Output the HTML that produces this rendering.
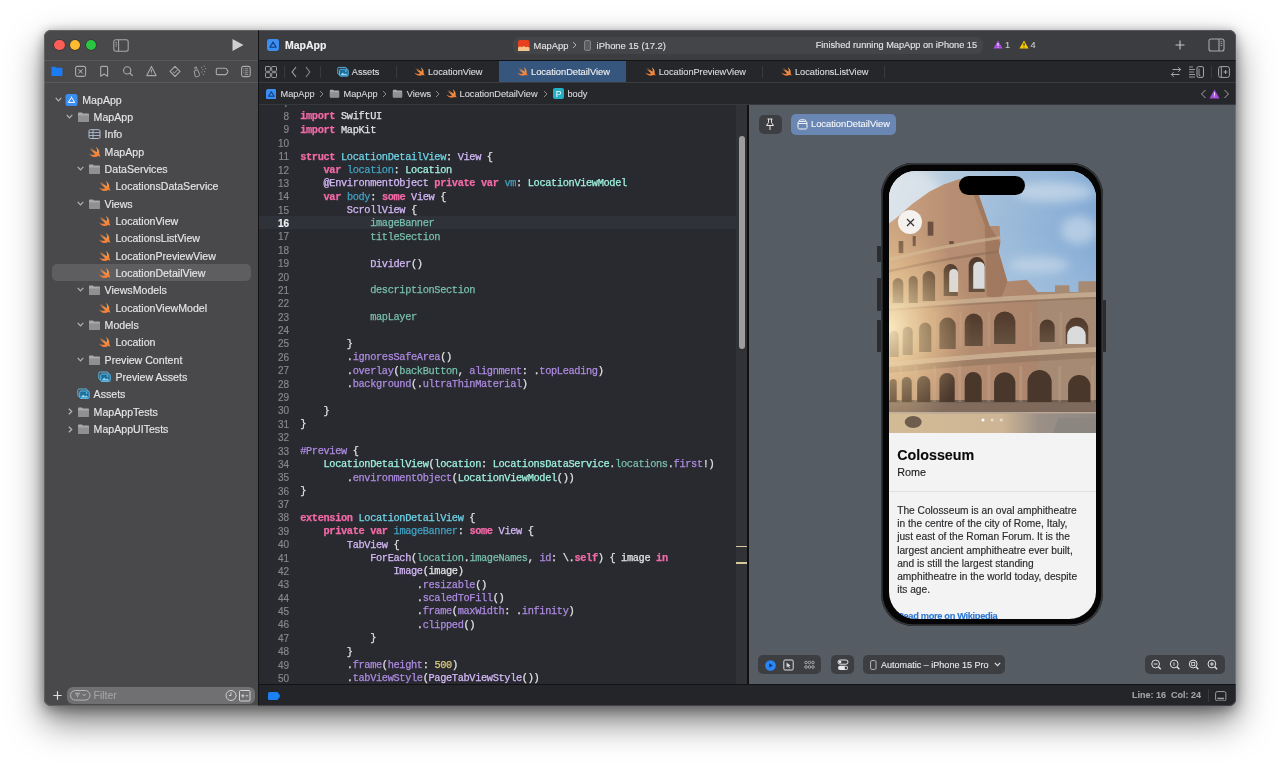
<!DOCTYPE html>
<html><head><meta charset="utf-8">
<style>
*{box-sizing:border-box;margin:0;padding:0}
html,body{width:1280px;height:765px;overflow:hidden;background:#fff}
body{position:relative;font-family:"Liberation Sans",sans-serif;color:#e6e6e7}
.a{position:absolute}
#shadow{position:absolute;left:44px;top:30px;width:1192px;height:676px;border-radius:7px;box-shadow:0 16px 34px rgba(0,0,0,.5),0 6px 14px rgba(0,0,0,.25),0 0 10px rgba(0,0,0,.18)}
#win{position:absolute;left:44px;top:30px;width:1192px;height:676px;border-radius:7px;overflow:hidden;background:#292a30;will-change:transform}
#side{left:0;top:0;width:214px;height:676px;background:#49494c}
.hl{position:absolute;height:1px}
.t{position:absolute;white-space:pre;line-height:1;-webkit-text-stroke:.12px currentColor}
.row{position:absolute;white-space:pre;font-size:10.6px;line-height:12px;color:#e6e6e7;-webkit-text-stroke:.15px currentColor}
#code{left:215px;top:75px;width:488px;height:579px;background:#292a30;overflow:hidden}
.ln{position:absolute;left:0;width:30px;text-align:right;font-family:"Liberation Sans",sans-serif;font-size:10px;line-height:13.38px;color:#88888d;margin-top:.8px;-webkit-text-stroke:.15px currentColor}
.ln.cur{color:#f0f0f0;font-weight:bold}
.cl{position:absolute;left:41.2px;white-space:pre;font-family:"Liberation Mono",monospace;font-size:10.3px;letter-spacing:-0.347px;line-height:13.38px;color:#e2e2e3;-webkit-text-stroke:.25px currentColor;margin-top:1.2px}
.k{color:#f26aa6;font-weight:bold}
.td{color:#6fd4e6}
.od{color:#41a1c0}
.pc{color:#9ef1dd}
.pf{color:#78bfac}
.oc{color:#d3b8f6}
.of{color:#ad8ae0}
.nu{color:#d9c97c}
</style></head><body>
<svg width="0" height="0" style="position:absolute">
<defs>
<linearGradient id="gsw" x1="0" y1="0" x2="0" y2="1"><stop offset="0" stop-color="#f7a24c"/><stop offset="1" stop-color="#f07a36"/></linearGradient>
<symbol id="i-swift" viewBox="1.6 2.2 20 19">
<path d="M13.543 3.41c4.114 2.47 6.545 7.162 5.549 11.131-.024.093-.05.181-.076.272l.002.001c2.062 2.538 1.5 5.258 1.236 4.745-1.072-2.086-3.066-1.568-4.088-1.043a6.803 6.803 0 0 1-.281.158l-.02.012-.002.002c-2.115 1.123-4.957 1.205-7.812-.022a12.568 12.568 0 0 1-5.64-4.838c.649.48 1.35.902 2.097 1.252 3.019 1.414 6.051 1.311 8.197-.002C9.651 12.73 7.101 9.67 5.146 7.191a10.628 10.628 0 0 1-1.005-1.384c2.34 2.142 6.038 4.83 7.365 5.576C8.69 8.408 6.208 4.743 6.324 4.86c4.436 4.47 8.528 6.996 8.528 6.996.154.085.27.154.36.213.085-.215.16-.437.224-.668.708-2.588-.09-5.548-1.893-7.992z" fill="url(#gsw)"/>
</symbol>
<symbol id="i-folder" viewBox="0 0 13 12">
<path d="M1 2.4 Q1 1.6 1.8 1.6 H4.9 L6 2.6 H11.2 Q12 2.6 12 3.4 V9.9 Q12 10.7 11.2 10.7 H1.8 Q1 10.7 1 9.9 Z" fill="#a9a9ac"/>
<path d="M1 4.4 H12 V9.9 Q12 10.7 11.2 10.7 H1.8 Q1 10.7 1 9.9 Z" fill="#909093"/>
</symbol>
<symbol id="i-proj" viewBox="0 0 13 12">
<rect x="0.5" y="0" width="12" height="12" rx="2.6" fill="#3a8ef2"/>
<path d="M6.5 3.4 L3.3 8.4 H9.7 Z M6.5 2.5 V3.8" stroke="#fff" stroke-width="1" fill="none" stroke-linejoin="round"/>
</symbol>
<symbol id="i-plist" viewBox="0 0 13 12">
<rect x="1" y="1.7" width="11" height="8.8" rx="1.4" fill="none" stroke="#aebfd0" stroke-width="1"/>
<path d="M1 4.6 H12 M1 7.5 H12 M5 1.7 V10.5" stroke="#aebfd0" stroke-width="0.9"/>
</symbol>
<symbol id="i-assets" viewBox="0 0 13 12">
<rect x="0.8" y="1" width="9.5" height="7.5" rx="1.3" fill="none" stroke="#5ab7e6" stroke-width="1"/>
<rect x="2.7" y="3" width="9.5" height="7.5" rx="1.3" fill="#1d6f9a" stroke="#5ab7e6" stroke-width="1"/>
<path d="M3.6 9.6 L6.2 6.6 L8 8.4 L9.2 7.3 L11.4 9.6 Z" fill="#8fd4f5"/>
<circle cx="9.6" cy="5" r="0.8" fill="#8fd4f5"/>
</symbol>
</defs>
</svg>
<div id="shadow"></div>
<div id="win">
<div id="side" class="a">
<!-- traffic lights -->
<div class="a" style="left:10.05px;top:9.75px;width:10.5px;height:10.5px;border-radius:50%;background:#fd5e57;box-shadow:0 0 0 .7px rgba(0,0,0,.3)"></div>
<div class="a" style="left:25.75px;top:9.75px;width:10.5px;height:10.5px;border-radius:50%;background:#febb2e;box-shadow:0 0 0 .7px rgba(0,0,0,.3)"></div>
<div class="a" style="left:41.75px;top:9.75px;width:10.5px;height:10.5px;border-radius:50%;background:#2bc641;box-shadow:0 0 0 .7px rgba(0,0,0,.3)"></div>
<!-- sidebar toggle -->
<svg class="a" style="left:68.6px;top:8.6px" width="16" height="13" viewBox="0 0 16 13"><rect x=".8" y=".8" width="14.4" height="11.4" rx="2" fill="none" stroke="#a9a9ac" stroke-width="1.05"/><path d="M5.6 .8 V12.2" stroke="#a9a9ac" stroke-width="1.05"/><path d="M2.5 3.4 H4 M2.5 5.2 H4 M2.5 7 H4" stroke="#a9a9ac" stroke-width=".9"/></svg>
<!-- play -->
<svg class="a" style="left:187px;top:8px" width="14" height="14" viewBox="0 0 14 14"><path d="M1.5 1 L12.5 7 L1.5 13 Z" fill="#cfcfd1"/></svg>
<div class="hl" style="left:0;top:30px;width:214px;background:#59595c"></div>
<!-- nav icons -->
<svg class="a" style="left:0;top:35px" width="214" height="14" viewBox="0 0 214 14" fill="none" stroke="#a9a9ac" stroke-width="1.1">
 <path d="M7.5 2.6 Q7.5 1.8 8.3 1.8 H11.4 L12.4 2.8 H17.6 Q18.4 2.8 18.4 3.6 V10.2 Q18.4 11 17.6 11 H8.3 Q7.5 11 7.5 10.2 Z" fill="#1b7cf4" stroke="none"/>
 <rect x="31.6" y="1.4" width="10" height="10" rx="1.8"/>
 <path d="M34.3 4.1 L38.9 8.7 M38.9 4.1 L34.3 8.7" stroke-width=".9"/><circle cx="36.6" cy="6.4" r="1.1" fill="#a9a9ac" stroke="none"/>
 <path d="M56.7 2.4 Q56.7 1.4 57.7 1.4 H62.6 Q63.6 1.4 63.6 2.4 V11.2 L60.15 9 L56.7 11.2 Z" stroke-linejoin="round"/>
 <circle cx="83.2" cy="5.4" r="3.6"/><path d="M85.8 8 L88.6 10.9" stroke-width="1.3"/>
 <path d="M107.45 1.4 L112.1 10.6 H102.8 Z" stroke-linejoin="round"/><path d="M107.45 4.6 V7.6 M107.45 8.7 V9.3" stroke-width="1"/>
 <path d="M131 1.3 L136 6.4 L131 11.5 L126 6.4 Z" stroke-linejoin="round"/><path d="M128.8 6.5 L130.4 8 L133.3 5" stroke-width="1"/>
 <path d="M150.2 6 L153.6 4.6 L155.6 9.6 Q155.9 10.6 154.9 11 L152.6 11.9 Q151.6 12.3 151.2 11.3 Z M151.4 4.4 L150.6 2.6 L152.3 1.9 L153 3.7" stroke-width=".95" stroke-linejoin="round"/>
 <path d="M157.5 2.2 h.01 M160.2 1 h.01 M158.8 4.6 h.01 M161.6 3.6 h.01 M157.8 7 h.01 M160.4 6.6 h.01 M159.4 9.2 h.01" stroke-width="1.1" stroke-linecap="round"/>
 <path d="M173.3 3.3 H181.4 Q182.2 3.3 182.7 4 L184 6.45 L182.7 8.9 Q182.2 9.6 181.4 9.6 H173.3 Q172.3 9.6 172.3 8.6 V4.3 Q172.3 3.3 173.3 3.3 Z"/>
 <rect x="197.6" y="1.4" width="8.6" height="10.2" rx="1.8"/><path d="M200.6 3.8 H204.2 M200.6 5.8 H204.2 M200.6 7.8 H204.2 M200.6 9.6 H204.2" stroke-width=".8"/><path d="M199.1 3.8 h.6 M199.1 5.8 h.6 M199.1 7.8 h.6" stroke-width=".8"/>
</svg>
<div class="hl" style="left:0;top:52px;width:214px;background:#59595c"></div>
<!-- selected row -->
<div class="a" style="left:8.4px;top:234.2px;width:198.2px;height:17px;border-radius:5px;background:#5e5e61"></div>
<!-- bottom filter -->
<svg class="a" style="left:9.4px;top:661.4px" width="9" height="9" viewBox="0 0 9 9"><path d="M4.5 .3 V8.7 M.3 4.5 H8.7" stroke="#e0e0e2" stroke-width="1.2"/></svg>
<div class="a" style="left:22.5px;top:657px;width:188px;height:16.6px;border-radius:6px;background:#707073"></div>
<svg class="a" style="left:26px;top:660px" width="21" height="11" viewBox="0 0 21 11" fill="none" stroke="#bcbcbe" stroke-width=".9"><rect x=".5" y=".5" width="19.5" height="9.6" rx="4.8"/><path d="M5 3.3 H10 M6 5 H9 M7 6.7 H8"/><path d="M12.5 4 L14.2 5.8 L15.9 4"/></svg>
<div class="t" style="left:49.5px;top:660px;font-size:10.5px;color:#a2a2a5">Filter</div>
<svg class="a" style="left:181px;top:659px" width="28" height="13" viewBox="0 0 28 13" fill="none" stroke="#d2d2d4" stroke-width="1"><circle cx="6" cy="6.5" r="5"/><path d="M6 3.5 V6.5 H3.8"/><rect x="14.5" y="1.5" width="10.5" height="10.5" rx="1"/><path d="M16.2 6.8 H19.4 M17.8 5.2 V8.4 M20.8 6.8 H23.2" stroke-width="1.1"/></svg>
<svg class="a" style="left:10.7px;top:66.7px" width="7" height="5" viewBox="0 0 7 5"><path d="M0.7 0.8 L3.5 3.8 L6.3 0.8" fill="none" stroke="#b4b4b6" stroke-width="1.2"/></svg>
<svg class="a" style="left:21.3px;top:63.7px" width="13" height="12"><use href="#i-proj"/></svg>
<div class="row" style="left:38.3px;top:63.7px">MapApp</div>
<svg class="a" style="left:22.0px;top:84.0px" width="7" height="5" viewBox="0 0 7 5"><path d="M0.7 0.8 L3.5 3.8 L6.3 0.8" fill="none" stroke="#b4b4b6" stroke-width="1.2"/></svg>
<svg class="a" style="left:32.6px;top:81.0px" width="13" height="12"><use href="#i-folder"/></svg>
<div class="row" style="left:49.6px;top:81.0px">MapApp</div>
<svg class="a" style="left:43.6px;top:98.4px" width="13" height="12"><use href="#i-plist"/></svg>
<div class="row" style="left:60.6px;top:98.4px">Info</div>
<svg class="a" style="left:43.6px;top:115.7px" width="13" height="12"><use href="#i-swift"/></svg>
<div class="row" style="left:60.6px;top:115.7px">MapApp</div>
<svg class="a" style="left:33.0px;top:136.0px" width="7" height="5" viewBox="0 0 7 5"><path d="M0.7 0.8 L3.5 3.8 L6.3 0.8" fill="none" stroke="#b4b4b6" stroke-width="1.2"/></svg>
<svg class="a" style="left:43.6px;top:133.0px" width="13" height="12"><use href="#i-folder"/></svg>
<div class="row" style="left:60.6px;top:133.0px">DataServices</div>
<svg class="a" style="left:54.4px;top:150.3px" width="13" height="12"><use href="#i-swift"/></svg>
<div class="row" style="left:71.4px;top:150.3px">LocationsDataService</div>
<svg class="a" style="left:33.0px;top:170.7px" width="7" height="5" viewBox="0 0 7 5"><path d="M0.7 0.8 L3.5 3.8 L6.3 0.8" fill="none" stroke="#b4b4b6" stroke-width="1.2"/></svg>
<svg class="a" style="left:43.6px;top:167.7px" width="13" height="12"><use href="#i-folder"/></svg>
<div class="row" style="left:60.6px;top:167.7px">Views</div>
<svg class="a" style="left:54.4px;top:185.0px" width="13" height="12"><use href="#i-swift"/></svg>
<div class="row" style="left:71.4px;top:185.0px">LocationView</div>
<svg class="a" style="left:54.4px;top:202.3px" width="13" height="12"><use href="#i-swift"/></svg>
<div class="row" style="left:71.4px;top:202.3px">LocationsListView</div>
<svg class="a" style="left:54.4px;top:219.7px" width="13" height="12"><use href="#i-swift"/></svg>
<div class="row" style="left:71.4px;top:219.7px">LocationPreviewView</div>
<svg class="a" style="left:54.4px;top:237.0px" width="13" height="12"><use href="#i-swift"/></svg>
<div class="row" style="left:71.4px;top:237.0px">LocationDetailView</div>
<svg class="a" style="left:33.0px;top:257.3px" width="7" height="5" viewBox="0 0 7 5"><path d="M0.7 0.8 L3.5 3.8 L6.3 0.8" fill="none" stroke="#b4b4b6" stroke-width="1.2"/></svg>
<svg class="a" style="left:43.6px;top:254.3px" width="13" height="12"><use href="#i-folder"/></svg>
<div class="row" style="left:60.6px;top:254.3px">ViewsModels</div>
<svg class="a" style="left:54.4px;top:271.7px" width="13" height="12"><use href="#i-swift"/></svg>
<div class="row" style="left:71.4px;top:271.7px">LocationViewModel</div>
<svg class="a" style="left:33.0px;top:292.0px" width="7" height="5" viewBox="0 0 7 5"><path d="M0.7 0.8 L3.5 3.8 L6.3 0.8" fill="none" stroke="#b4b4b6" stroke-width="1.2"/></svg>
<svg class="a" style="left:43.6px;top:289.0px" width="13" height="12"><use href="#i-folder"/></svg>
<div class="row" style="left:60.6px;top:289.0px">Models</div>
<svg class="a" style="left:54.4px;top:306.3px" width="13" height="12"><use href="#i-swift"/></svg>
<div class="row" style="left:71.4px;top:306.3px">Location</div>
<svg class="a" style="left:33.0px;top:326.6px" width="7" height="5" viewBox="0 0 7 5"><path d="M0.7 0.8 L3.5 3.8 L6.3 0.8" fill="none" stroke="#b4b4b6" stroke-width="1.2"/></svg>
<svg class="a" style="left:43.6px;top:323.6px" width="13" height="12"><use href="#i-folder"/></svg>
<div class="row" style="left:60.6px;top:323.6px">Preview Content</div>
<svg class="a" style="left:54.4px;top:341.0px" width="13" height="12"><use href="#i-assets"/></svg>
<div class="row" style="left:71.4px;top:341.0px">Preview Assets</div>
<svg class="a" style="left:32.6px;top:358.3px" width="13" height="12"><use href="#i-assets"/></svg>
<div class="row" style="left:49.6px;top:358.3px">Assets</div>
<svg class="a" style="left:24.3px;top:378.1px" width="5" height="7" viewBox="0 0 5 7"><path d="M0.8 0.7 L3.8 3.5 L0.8 6.3" fill="none" stroke="#b4b4b6" stroke-width="1.2"/></svg>
<svg class="a" style="left:32.6px;top:375.6px" width="13" height="12"><use href="#i-folder"/></svg>
<div class="row" style="left:49.6px;top:375.6px">MapAppTests</div>
<svg class="a" style="left:24.3px;top:395.5px" width="5" height="7" viewBox="0 0 5 7"><path d="M0.8 0.7 L3.8 3.5 L0.8 6.3" fill="none" stroke="#b4b4b6" stroke-width="1.2"/></svg>
<svg class="a" style="left:32.6px;top:393.0px" width="13" height="12"><use href="#i-folder"/></svg>
<div class="row" style="left:49.6px;top:393.0px">MapAppUITests</div>

</div>
<div class="a" style="left:214px;top:0;width:1.2px;height:676px;background:#141416"></div>
<!-- editor title bar -->
<div class="a" style="left:215px;top:0;width:977px;height:30px;background:#3c3d40"></div>
<div class="hl" style="left:215px;top:30px;width:977px;background:#141416"></div>
<svg class="a" style="left:222.6px;top:9px" width="12" height="12" viewBox="0 0 12 12"><rect x="0" y="0" width="12" height="12" rx="2.4" fill="#3b8ef3"/><path d="M6 3.2 L2.9 8.2 H9.1 Z M6 2.4 V3.6" stroke="#143a78" stroke-width="1.15" fill="none" stroke-linejoin="round"/></svg>
<div class="t" style="left:241px;top:9.5px;font-size:10.5px;font-weight:bold;color:#f2f2f3">MapApp</div>
<!-- activity capsule -->
<div class="a" style="left:468.5px;top:6.7px;width:470px;height:17.2px;border-radius:6px;background:#444548"></div>
<svg class="a" style="left:474.4px;top:9.5px" width="11.5" height="11.5" viewBox="0 0 12 12"><rect width="12" height="12" rx="2.2" fill="#e8401f"/><path d="M0 12 V8 Q2 6 4 7.5 Q6 5.5 8 7.5 Q10 6.5 12 8 V12 Z" fill="#f4c28a"/></svg>
<div class="t" style="left:489.6px;top:10.5px;font-size:9.4px;color:#e4e4e6">MapApp</div>
<svg class="a" style="left:528px;top:11px" width="5" height="8" viewBox="0 0 5 8"><path d="M1 1 L4 4 L1 7" fill="none" stroke="#b0b0b3" stroke-width="1"/></svg>
<svg class="a" style="left:540px;top:9.7px" width="7" height="11" viewBox="0 0 7 11"><rect x=".6" y=".6" width="5.8" height="9.8" rx="1.2" fill="#5c5c60" stroke="#8e8e91" stroke-width=".9"/></svg>
<div class="t" style="left:552.6px;top:10.5px;font-size:9.4px;color:#e4e4e6">iPhone 15 (17.2)</div>
<div class="t" style="left:771.7px;top:10.5px;font-size:9.2px;color:#e4e4e6">Finished running MapApp on iPhone 15</div>
<svg class="a" style="left:949px;top:10px" width="10" height="9" viewBox="0 0 10 9"><path d="M5 .5 L9.6 8.5 H.4 Z" fill="#a94ddf"/><path d="M5 3 V6 M5 7 V7.6" stroke="#fff" stroke-width="1"/></svg>
<div class="t" style="left:961px;top:10.5px;font-size:9.2px;color:#c9c9cc">1</div>
<svg class="a" style="left:975px;top:10px" width="10" height="9" viewBox="0 0 10 9"><path d="M5 .5 L9.6 8.5 H.4 Z" fill="#f5c800"/><path d="M5 3 V6 M5 7 V7.6" stroke="#3a2c00" stroke-width="1"/></svg>
<div class="t" style="left:986.5px;top:10.5px;font-size:9.2px;color:#c9c9cc">4</div>
<svg class="a" style="left:1131px;top:10px" width="10" height="10" viewBox="0 0 10 10"><path d="M5 .5 V9.5 M.5 5 H9.5" stroke="#c8c8ca" stroke-width="1.1"/></svg>
<svg class="a" style="left:1164px;top:8px" width="17" height="14" viewBox="0 0 17 14"><rect x="1" y="1" width="15" height="12" rx="2" fill="none" stroke="#a9a9ac" stroke-width="1.1"/><path d="M11 1 V13" stroke="#a9a9ac" stroke-width="1.1"/><path d="M12.6 3.6 H14.2 M12.6 5.6 H14.2 M12.6 7.6 H14.2" stroke="#a9a9ac" stroke-width=".9"/></svg>

<!-- tab bar -->
<div class="a" style="left:215px;top:31px;width:977px;height:21.5px;background:#26272b"></div>
<div class="a" style="left:454.75px;top:31px;width:127px;height:21.5px;background:#37567e"></div>
<svg class="a" style="left:221.3px;top:35.7px" width="12" height="12" viewBox="0 0 12 12" fill="none" stroke="#a6a6a9" stroke-width=".95"><rect x=".5" y=".5" width="4.8" height="4.8" rx=".7"/><rect x="6.7" y=".5" width="4.8" height="4.8" rx=".7"/><rect x=".5" y="6.7" width="4.8" height="4.8" rx=".7"/><rect x="6.7" y="6.7" width="4.8" height="4.8" rx=".7"/></svg>
<div class="a" style="left:240px;top:36px;width:1px;height:12px;background:#3a3a3e"></div>
<svg class="a" style="left:247px;top:36px" width="24" height="12" viewBox="0 0 24 12" fill="none" stroke="#a6a6a9" stroke-width="1.1"><path d="M5 1 L1.2 6 L5 11"/><path d="M15 1 L18.8 6 L15 11" stroke="#8a8a8d"/></svg>
<div class="a" style="left:275.5px;top:36px;width:1px;height:12px;background:#3a3a3e"></div>
<svg class="a" style="left:292.5px;top:36px" width="12" height="12"><use href="#i-assets"/></svg>
<div class="t" style="left:307.75px;top:37.7px;font-size:9.2px;color:#dcdcde">Assets</div>
<div class="a" style="left:351.7px;top:36px;width:1px;height:12px;background:#3a3a3e"></div>
<svg class="a" style="left:370px;top:36px" width="11" height="11"><use href="#i-swift"/></svg>
<div class="t" style="left:384px;top:37.7px;font-size:9.2px;color:#dcdcde">LocationView</div>
<svg class="a" style="left:473px;top:36px" width="11" height="11"><use href="#i-swift"/></svg>
<div class="t" style="left:487px;top:37.7px;font-size:9.3px;color:#f0f0f2">LocationDetailView</div>
<svg class="a" style="left:600.6px;top:36px" width="11" height="11"><use href="#i-swift"/></svg>
<div class="t" style="left:614.75px;top:37.7px;font-size:9.2px;color:#dcdcde">LocationPreviewView</div>
<div class="a" style="left:718px;top:36px;width:1px;height:12px;background:#3a3a3e"></div>
<svg class="a" style="left:737px;top:36px" width="11" height="11"><use href="#i-swift"/></svg>
<div class="t" style="left:751px;top:37.7px;font-size:9.2px;color:#dcdcde">LocationsListView</div>
<div class="a" style="left:840px;top:36px;width:1px;height:12px;background:#3a3a3e"></div>
<svg class="a" style="left:1126px;top:36px" width="12" height="12" viewBox="0 0 12 12" fill="none" stroke="#a6a6a9" stroke-width="1"><path d="M2.5 3.5 H10.5 M8.3 1.2 L10.6 3.5 L8.3 5.8"/><path d="M9.5 8.5 H1.5 M3.7 6.2 L1.4 8.5 L3.7 10.8"/></svg>
<svg class="a" style="left:1144px;top:36px" width="17" height="12" viewBox="0 0 17 12" fill="none" stroke="#a6a6a9" stroke-width=".9"><path d="M1 1 H5 M1 3.5 H7 M1 6 H6 M1 8.5 H7 M1 11 H7"/><rect x="9" y=".6" width="6.5" height="10.8" rx="1.5" stroke-width="1"/><path d="M11 2.6 V9.4 H12.3"/></svg>
<div class="a" style="left:1167px;top:36px;width:1px;height:12px;background:#3a3a3e"></div>
<svg class="a" style="left:1173.5px;top:36px" width="12" height="12" viewBox="0 0 12 12" fill="none" stroke="#a6a6a9" stroke-width="1"><rect x=".6" y=".6" width="10.8" height="10.8" rx="2"/><path d="M3.3 .6 V11.4"/><path d="M5.5 6 H9.5 M7.5 4 V8"/></svg>

<!-- breadcrumb -->
<div class="a" style="left:215px;top:53px;width:977px;height:21.5px;background:#26272b"></div>
<div class="hl" style="left:215px;top:52.3px;width:977px;background:#3a3b3f"></div>
<div class="hl" style="left:215px;top:74.3px;width:977px;background:#37383d"></div>
<svg class="a" style="left:221.8px;top:58.5px" width="10.7" height="10.7" viewBox="0 0 12 12"><rect width="12" height="12" rx="2.4" fill="#3b8ef3"/><path d="M6 3.2 L2.9 8.2 H9.1 Z M6 2.4 V3.6" stroke="#143a78" stroke-width="1.15" fill="none" stroke-linejoin="round"/></svg>
<div class="t" style="left:236.5px;top:59.5px;font-size:9.2px;color:#d8d8da">MapApp</div>
<svg class="a" style="left:275px;top:60px" width="5" height="8" viewBox="0 0 5 8"><path d="M1 1 L4 4 L1 7" fill="none" stroke="#8a8a8d" stroke-width="1"/></svg>
<svg class="a" style="left:284.5px;top:58px" width="11" height="11" viewBox="0 0 13 12"><use href="#i-folder"/></svg>
<div class="t" style="left:299.5px;top:59.5px;font-size:9.2px;color:#d8d8da">MapApp</div>
<svg class="a" style="left:338px;top:60px" width="5" height="8" viewBox="0 0 5 8"><path d="M1 1 L4 4 L1 7" fill="none" stroke="#8a8a8d" stroke-width="1"/></svg>
<svg class="a" style="left:347.5px;top:58px" width="11" height="11" viewBox="0 0 13 12"><use href="#i-folder"/></svg>
<div class="t" style="left:362.8px;top:59.5px;font-size:9.2px;color:#d8d8da">Views</div>
<svg class="a" style="left:391px;top:60px" width="5" height="8" viewBox="0 0 5 8"><path d="M1 1 L4 4 L1 7" fill="none" stroke="#8a8a8d" stroke-width="1"/></svg>
<svg class="a" style="left:401.5px;top:58px" width="11" height="11"><use href="#i-swift"/></svg>
<div class="t" style="left:415.6px;top:59.5px;font-size:9.2px;color:#d8d8da">LocationDetailView</div>
<svg class="a" style="left:499px;top:60px" width="5" height="8" viewBox="0 0 5 8"><path d="M1 1 L4 4 L1 7" fill="none" stroke="#8a8a8d" stroke-width="1"/></svg>
<svg class="a" style="left:508.5px;top:58.3px" width="11" height="11" viewBox="0 0 11 11"><rect width="11" height="11" rx="2" fill="#23b0c4"/><text x="5.5" y="8.6" font-size="8.5" font-family="Liberation Sans" fill="#fff" text-anchor="middle">P</text></svg>
<div class="t" style="left:523.5px;top:59.5px;font-size:9.2px;color:#d8d8da">body</div>
<svg class="a" style="left:1155.5px;top:59px" width="7" height="10" viewBox="0 0 7 10"><path d="M5.5 1 L1.5 5 L5.5 9" fill="none" stroke="#a6a6a9" stroke-width="1"/></svg>
<svg class="a" style="left:1165px;top:58.5px" width="11" height="10" viewBox="0 0 11 10"><path d="M5.5 .5 L10.5 9.5 H.5 Z" fill="#a64ee0" stroke-linejoin="round"/><path d="M5.5 3.5 V6.6 M5.5 7.6 V8.2" stroke="#f4e6ff" stroke-width="1"/></svg>
<svg class="a" style="left:1179px;top:59px" width="7" height="10" viewBox="0 0 7 10"><path d="M1.5 1 L5.5 5 L1.5 9" fill="none" stroke="#a6a6a9" stroke-width="1"/></svg>
<div id="code" class="a">
  <div class="a" style="left:0;top:111px;width:477px;height:13px;background:#2f3239"></div>
  <div class="a" style="left:476.7px;top:0;width:11.3px;height:579px;background:#313236"></div>
  <div class="a" style="left:479.9px;top:31px;width:6px;height:212.8px;border-radius:3px;background:#9d9da0"></div>
  <div class="a" style="left:477px;top:440.5px;width:11px;height:1.6px;background:#d6c99b"></div>
  <div class="a" style="left:477px;top:457.2px;width:11px;height:1.6px;background:#d6c99b"></div>
  <div id="lines" class="a" style="left:0;top:0;width:476px;height:579px">
  <div class="ln" style="top:-9.17px">7</div>
<div class="ln" style="top:4.21px">8</div>
<div class="cl" style="top:4.21px"><span class="k">import</span> SwiftUI</div>
<div class="ln" style="top:17.59px">9</div>
<div class="cl" style="top:17.59px"><span class="k">import</span> MapKit</div>
<div class="ln" style="top:30.97px">10</div>
<div class="cl" style="top:30.97px"></div>
<div class="ln" style="top:44.35px">11</div>
<div class="cl" style="top:44.35px"><span class="k">struct</span> <span class="td">LocationDetailView</span>: <span class="oc">View</span> {</div>
<div class="ln" style="top:57.73px">12</div>
<div class="cl" style="top:57.73px">    <span class="k">var</span> <span class="od">location</span>: <span class="pc">Location</span></div>
<div class="ln" style="top:71.11px">13</div>
<div class="cl" style="top:71.11px">    <span class="oc">@EnvironmentObject</span> <span class="k">private</span> <span class="k">var</span> <span class="od">vm</span>: <span class="pc">LocationViewModel</span></div>
<div class="ln" style="top:84.49px">14</div>
<div class="cl" style="top:84.49px">    <span class="k">var</span> <span class="od">body</span>: <span class="k">some</span> <span class="oc">View</span> {</div>
<div class="ln" style="top:97.87px">15</div>
<div class="cl" style="top:97.87px">        <span class="oc">ScrollView</span> {</div>
<div class="ln cur" style="top:111.25px">16</div>
<div class="cl" style="top:111.25px">            <span class="pf">imageBanner</span></div>
<div class="ln" style="top:124.63px">17</div>
<div class="cl" style="top:124.63px">            <span class="pf">titleSection</span></div>
<div class="ln" style="top:138.01px">18</div>
<div class="cl" style="top:138.01px"></div>
<div class="ln" style="top:151.39px">19</div>
<div class="cl" style="top:151.39px">            <span class="oc">Divider</span>()</div>
<div class="ln" style="top:164.77px">20</div>
<div class="cl" style="top:164.77px"></div>
<div class="ln" style="top:178.15px">21</div>
<div class="cl" style="top:178.15px">            <span class="pf">descriptionSection</span></div>
<div class="ln" style="top:191.53px">22</div>
<div class="cl" style="top:191.53px"></div>
<div class="ln" style="top:204.91px">23</div>
<div class="cl" style="top:204.91px">            <span class="pf">mapLayer</span></div>
<div class="ln" style="top:218.29px">24</div>
<div class="cl" style="top:218.29px"></div>
<div class="ln" style="top:231.67px">25</div>
<div class="cl" style="top:231.67px">        }</div>
<div class="ln" style="top:245.05px">26</div>
<div class="cl" style="top:245.05px">        .<span class="of">ignoresSafeArea</span>()</div>
<div class="ln" style="top:258.43px">27</div>
<div class="cl" style="top:258.43px">        .<span class="of">overlay</span>(<span class="pf">backButton</span>, <span class="of">alignment</span>: .<span class="of">topLeading</span>)</div>
<div class="ln" style="top:271.81px">28</div>
<div class="cl" style="top:271.81px">        .<span class="of">background</span>(.<span class="of">ultraThinMaterial</span>)</div>
<div class="ln" style="top:285.19px">29</div>
<div class="cl" style="top:285.19px"></div>
<div class="ln" style="top:298.57px">30</div>
<div class="cl" style="top:298.57px">    }</div>
<div class="ln" style="top:311.95px">31</div>
<div class="cl" style="top:311.95px">}</div>
<div class="ln" style="top:325.33px">32</div>
<div class="cl" style="top:325.33px"></div>
<div class="ln" style="top:338.71px">33</div>
<div class="cl" style="top:338.71px"><span class="of">#Preview</span> {</div>
<div class="ln" style="top:352.09px">34</div>
<div class="cl" style="top:352.09px">    <span class="pc">LocationDetailView</span>(<span class="pc">location</span>: <span class="pc">LocationsDataService</span>.<span class="pf">locations</span>.<span class="of">first</span>!)</div>
<div class="ln" style="top:365.47px">35</div>
<div class="cl" style="top:365.47px">        .<span class="of">environmentObject</span>(<span class="pc">LocationViewModel</span>())</div>
<div class="ln" style="top:378.85px">36</div>
<div class="cl" style="top:378.85px">}</div>
<div class="ln" style="top:392.23px">37</div>
<div class="cl" style="top:392.23px"></div>
<div class="ln" style="top:405.61px">38</div>
<div class="cl" style="top:405.61px"><span class="k">extension</span> <span class="td">LocationDetailView</span> {</div>
<div class="ln" style="top:418.99px">39</div>
<div class="cl" style="top:418.99px">    <span class="k">private</span> <span class="k">var</span> <span class="od">imageBanner</span>: <span class="k">some</span> <span class="oc">View</span> {</div>
<div class="ln" style="top:432.37px">40</div>
<div class="cl" style="top:432.37px">        <span class="oc">TabView</span> {</div>
<div class="ln" style="top:445.75px">41</div>
<div class="cl" style="top:445.75px">            <span class="oc">ForEach</span>(<span class="pf">location</span>.<span class="pf">imageNames</span>, <span class="of">id</span>: \.<span class="k">self</span>) { image <span class="k">in</span></div>
<div class="ln" style="top:459.13px">42</div>
<div class="cl" style="top:459.13px">                <span class="oc">Image</span>(image)</div>
<div class="ln" style="top:472.51px">43</div>
<div class="cl" style="top:472.51px">                    .<span class="of">resizable</span>()</div>
<div class="ln" style="top:485.89px">44</div>
<div class="cl" style="top:485.89px">                    .<span class="of">scaledToFill</span>()</div>
<div class="ln" style="top:499.27px">45</div>
<div class="cl" style="top:499.27px">                    .<span class="of">frame</span>(<span class="of">maxWidth</span>: .<span class="of">infinity</span>)</div>
<div class="ln" style="top:512.65px">46</div>
<div class="cl" style="top:512.65px">                    .<span class="of">clipped</span>()</div>
<div class="ln" style="top:526.03px">47</div>
<div class="cl" style="top:526.03px">            }</div>
<div class="ln" style="top:539.41px">48</div>
<div class="cl" style="top:539.41px">        }</div>
<div class="ln" style="top:552.79px">49</div>
<div class="cl" style="top:552.79px">        .<span class="of">frame</span>(<span class="of">height</span>: <span class="nu">500</span>)</div>
<div class="ln" style="top:566.17px">50</div>
<div class="cl" style="top:566.17px">        .<span class="of">tabViewStyle</span>(<span class="oc">PageTabViewStyle</span>())</div>
<div class="ln" style="top:579.55px">51</div>

  </div>
</div>
<div class="a" style="left:703px;top:75px;width:1.8px;height:579px;background:#101013"></div>
<div class="a" style="left:705px;top:75px;width:487px;height:579px;background:#565c63"></div>
<!-- pin -->
<div class="a" style="left:714.6px;top:85.2px;width:23px;height:18.8px;border-radius:5px;background:#3d3e41"></div>
<svg class="a" style="left:720px;top:88px" width="12" height="13" viewBox="0 0 12 13" fill="none" stroke="#e6e6e8" stroke-width="1"><path d="M3.5 1 H8.5 M4.5 1 V4.5 L2.5 7.5 H9.5 L7.5 4.5 V1 M6 7.5 V12"/></svg>
<!-- blue button -->
<div class="a" style="left:746.7px;top:84.1px;width:105.6px;height:20.8px;border-radius:5px;background:#6a87b3"></div>
<svg class="a" style="left:752.5px;top:88.5px" width="11" height="11" viewBox="0 0 11 11" fill="none" stroke="#eef2f8" stroke-width="1"><rect x="1" y="2.5" width="9" height="7.5" rx="1.5"/><path d="M2 2.5 Q2 .8 3.5 .8 H7.5 Q9 .8 9 2.5" /><path d="M1 4.5 H10"/></svg>
<div class="t" style="left:767px;top:89.5px;font-size:9.3px;color:#f4f6fa">LocationDetailView</div>

<!-- phone side buttons -->
<div class="a" style="left:833px;top:216px;width:3.5px;height:16px;border-radius:1px;background:#2b2c2f"></div>
<div class="a" style="left:833px;top:248.4px;width:3.5px;height:32.3px;border-radius:1px;background:#2b2c2f"></div>
<div class="a" style="left:833px;top:290px;width:3.5px;height:31.5px;border-radius:1px;background:#2b2c2f"></div>
<div class="a" style="left:1058.5px;top:269.6px;width:3.5px;height:52.2px;border-radius:1px;background:#2b2c2f"></div>
<!-- phone -->
<div class="a" style="left:837.3px;top:133.1px;width:221.4px;height:462.6px;border-radius:32px;background:#050506;box-shadow:inset 0 0 0 1.7px #343538"></div>
<div class="a" style="left:844.7px;top:140.5px;width:207px;height:448.5px;border-radius:27px;overflow:hidden;background:#f3f3f4"><div class="a" style="left:0;top:-0.6px;width:207px;height:450px">
  <svg class="a" style="left:0;top:0" width="207.4" height="263.1" viewBox="0 0 207.4 263.1">
<defs>
<clipPath id="cw"><path d="M0.0 53.4 L7.3 48.1 L23.2 33.9 L40.7 21.6 L54.7 14.5 L70.7 9.1 L83.7 10.1 L86.7 16.1 L100.7 56.1 L110.6 56.1 L111.4 72.8 L109.7 81.6 L118.5 111.6 L137.7 109.8 L148.5 122.1 L166.2 122.1 L166.2 115.6 L180.3 115.6 L180.3 122.1 L189.7 122.1 L189.7 111.6 L207.4 111.6 L207.4 263.1 L0.0 263.1 Z"/></clipPath>
<linearGradient id="sky" x1="0" y1="0" x2="1" y2=".35"><stop offset="0" stop-color="#d2dbe3"/><stop offset=".45" stop-color="#a4c0db"/><stop offset="1" stop-color="#7fa8d4"/></linearGradient><filter id="bl" x="-50%" y="-50%" width="200%" height="200%"><feGaussianBlur stdDeviation="5"/></filter>
<linearGradient id="skyb" x1="0" y1="0" x2="0" y2="1"><stop offset="0" stop-color="#c8d9e8" stop-opacity="0"/><stop offset="1" stop-color="#d6e2ec" stop-opacity=".95"/></linearGradient>
<linearGradient id="wall" x1="0" y1="0" x2="1" y2="0"><stop offset="0" stop-color="#d8b08a"/><stop offset=".3" stop-color="#c0967a"/><stop offset="1" stop-color="#a8846c"/></linearGradient>
<radialGradient id="glow" cx="0" cy=".6" r=".4"><stop offset="0" stop-color="#fff0c8" stop-opacity=".9"/><stop offset=".5" stop-color="#f8d9a0" stop-opacity=".45"/><stop offset="1" stop-color="#f0c890" stop-opacity="0"/></radialGradient>
<linearGradient id="ground" x1="0" y1="0" x2="1" y2="0"><stop offset="0" stop-color="#d3bb96"/><stop offset=".55" stop-color="#cdb595"/><stop offset=".72" stop-color="#9c9086"/><stop offset="1" stop-color="#8d8883"/></linearGradient>
<linearGradient id="arch" x1="0" y1="0" x2="0" y2="1"><stop offset="0" stop-color="#4a3528"/><stop offset="1" stop-color="#64503f"/></linearGradient>
</defs>
<rect width="207.4" height="263.1" fill="url(#sky)"/>
<rect y="60" width="207.4" height="203.10000000000002" fill="url(#skyb)"/>
<g filter="url(#bl)"><ellipse cx="165" cy="22" rx="40" ry="10" fill="#dfe8f1" opacity=".55"/><ellipse cx="190" cy="60" rx="18" ry="14" fill="#e2eaf2" opacity=".5"/><ellipse cx="20" cy="30" rx="35" ry="30" fill="#e6ebf0" opacity=".6"/><ellipse cx="150" cy="95" rx="30" ry="8" fill="#d9e5ef" opacity=".5"/></g>
<g clip-path="url(#cw)">
<rect width="207.4" height="263.1" fill="url(#wall)"/>
<path d="M79.7 12.1 L86.7 16.1 L100.7 56.1 L111.4 72.8 L109.7 81.6 L118.5 111.6 L111.7 130.1 L97.7 126.1 L95.7 55.1 Z" fill="#a27a60" opacity=".85"/>
<rect x="148.5" y="111.1" width="58.9" height="130" fill="#ad917a"/>
<path d="M0.0 88.1 Q55.9 74.1 111.7 66.1 L111.7 69.1 Q55.9 77.1 0.0 91.1 Z" fill="#d9c0a0" opacity="0.7"/>
<path d="M0.0 100.1 Q55.9 87.1 111.7 80.1 L111.7 82.6 Q55.9 89.6 0.0 102.6 Z" fill="#8c6c58" opacity="0.5"/>
<path d="M0.0 135.1 Q103.7 125.6 207.4 122.1 L207.4 127.1 Q103.7 130.6 0.0 140.1 Z" fill="#d7bfa2" opacity="0.75"/>
<path d="M0.0 139.1 Q103.7 130.1 207.4 127.1 L207.4 129.1 Q103.7 132.1 0.0 141.1 Z" fill="#8b705c" opacity="0.5"/>
<path d="M0.0 192.1 Q103.7 181.6 207.4 177.1 L207.4 182.1 Q103.7 186.6 0.0 197.1 Z" fill="#d6bea0" opacity="0.85"/>
<path d="M0.0 197.1 Q103.7 186.6 207.4 182.1 L207.4 188.1 Q103.7 192.6 0.0 203.1 Z" fill="#8e745f" opacity="0.55"/>
<rect x="0" y="230.1" width="207.4" height="2.5" fill="#5a4a3e" opacity=".8"/>
<rect x="0" y="230.1" width="207.4" height="13.5" fill="#6f6258" opacity=".75"/>
<rect x="0" y="242.1" width="207.4" height="1.6" fill="#d8d0c4" opacity=".8"/>
<path d="M3.7 133.1 V113.4 A5.3 5.3 0 0 1 14.3 113.4 V133.1 Z" fill="url(#arch)" opacity="1"/>
<path d="M19.7 133.1 V110.6 A4.5 4.5 0 0 1 28.7 110.6 V133.1 Z" fill="url(#arch)" opacity="1"/>
<path d="M33.7 131.1 V107.3 A6.2 6.2 0 0 1 46.1 107.3 V131.1 Z" fill="url(#arch)" opacity="1"/>
<path d="M54.7 126.1 V101.1 A7.0 7.0 0 0 1 68.7 101.1 V126.1 Z" fill="url(#arch)" opacity="1"/>
<path d="M79.7 122.1 V95.1 A8.0 8.0 0 0 1 95.7 95.1 V122.1 Z" fill="url(#arch)" opacity="1"/>
<path d="M60.2 122.1 V103.5 A4.4 4.4 0 0 1 69.1 103.5 V122.1 Z" fill="#e8edf1" opacity="1"/>
<path d="M84.2 118.7 V96.8 A5.8 5.8 0 0 1 95.7 96.8 V118.7 Z" fill="#e8edf1" opacity="1"/>
<path d="M0.7 187.1 V165.3 A4.5 4.5 0 0 1 9.7 165.3 V187.1 Z" fill="url(#arch)" opacity="1"/>
<path d="M13.7 185.1 V161.7 A5.0 5.0 0 0 1 23.7 161.7 V185.1 Z" fill="url(#arch)" opacity="1"/>
<path d="M30.1 182.1 V158.7 A6.1 6.1 0 0 1 42.3 158.7 V182.1 Z" fill="url(#arch)" opacity="1"/>
<path d="M50.4 179.1 V155.7 A8.1 8.1 0 0 1 66.7 155.7 V179.1 Z" fill="url(#arch)" opacity="1"/>
<path d="M75.7 176.1 V152.5 A9.0 9.0 0 0 1 93.7 152.5 V176.1 Z" fill="url(#arch)" opacity="1"/>
<path d="M105.1 174.1 V151.2 A10.7 10.7 0 0 1 126.4 151.2 V174.1 Z" fill="url(#arch)" opacity="1"/>
<path d="M150.7 172.1 V157.1 A7.5 7.5 0 0 1 165.7 157.1 V172.1 Z" fill="url(#arch)" opacity="1"/>
<path d="M176.7 174.1 V158.9 A11.3 11.3 0 0 1 199.3 158.9 V174.1 Z" fill="url(#arch)" opacity="1"/>
<path d="M178.2 174.1 V165.3 A9.2 9.2 0 0 1 196.7 165.3 V174.1 Z" fill="#e8edf1" opacity="1"/>
<path d="M0.7 232.1 V212.6 A3.5 3.5 0 0 1 7.7 212.6 V232.1 Z" fill="#42332a" opacity="1"/>
<path d="M12.7 232.1 V212.1 A5.0 5.0 0 0 1 22.7 212.1 V232.1 Z" fill="#42332a" opacity="1"/>
<path d="M28.1 232.1 V212.7 A6.6 6.6 0 0 1 41.3 212.7 V232.1 Z" fill="#42332a" opacity="1"/>
<path d="M50.4 232.1 V210.7 A7.6 7.6 0 0 1 65.7 210.7 V232.1 Z" fill="#42332a" opacity="1"/>
<path d="M75.7 232.1 V210.6 A8.5 8.5 0 0 1 92.7 210.6 V232.1 Z" fill="#42332a" opacity="1"/>
<path d="M105.1 232.1 V211.8 A10.7 10.7 0 0 1 126.4 211.8 V232.1 Z" fill="#42332a" opacity="1"/>
<path d="M138.5 232.1 V212.2 A12.1 12.1 0 0 1 162.7 212.2 V232.1 Z" fill="#42332a" opacity="1"/>
<path d="M179.1 232.1 V216.2 A11.1 11.1 0 0 1 201.4 216.2 V232.1 Z" fill="#42332a" opacity="1"/>
<rect x="38.7" y="51.6" width="5.7" height="14.1" fill="#6a5040"/>
<rect x="9.7" y="71.1" width="4.6" height="12.0" fill="#6a5040"/>
<rect x="23.7" y="66.1" width="3.0" height="10.0" fill="#6a5040"/>
<rect x="60.2" y="71.1" width="4.5" height="3.0" fill="#6a5040"/>
<rect x="10.2" y="196.1" width="3" height="36" fill="#d9c3a8" opacity=".25"/>
<rect x="25.2" y="196.1" width="3" height="36" fill="#d9c3a8" opacity=".25"/>
<rect x="44.2" y="196.1" width="3" height="36" fill="#d9c3a8" opacity=".25"/>
<rect x="69.2" y="196.1" width="3" height="36" fill="#d9c3a8" opacity=".25"/>
<rect x="98.2" y="196.1" width="3" height="36" fill="#d9c3a8" opacity=".25"/>
<rect x="130.2" y="196.1" width="3" height="36" fill="#d9c3a8" opacity=".25"/>
<rect x="169.2" y="196.1" width="3" height="36" fill="#d9c3a8" opacity=".25"/>
<rect x="202.2" y="196.1" width="3" height="36" fill="#d9c3a8" opacity=".25"/>
<rect x="10.5" y="142.1" width="2.4" height="34" fill="#d9c3a8" opacity=".2"/>
<rect x="25.5" y="142.1" width="2.4" height="34" fill="#d9c3a8" opacity=".2"/>
<rect x="44.5" y="142.1" width="2.4" height="34" fill="#d9c3a8" opacity=".2"/>
<rect x="70.5" y="142.1" width="2.4" height="34" fill="#d9c3a8" opacity=".2"/>
<rect x="98.5" y="142.1" width="2.4" height="34" fill="#d9c3a8" opacity=".2"/>
<rect x="140.5" y="142.1" width="2.4" height="34" fill="#d9c3a8" opacity=".2"/>
<rect x="170.5" y="142.1" width="2.4" height="34" fill="#d9c3a8" opacity=".2"/>
<rect width="207.4" height="263.1" fill="#7a5a45" opacity=".12"/>
<rect width="207.4" height="263.1" fill="url(#glow)"/>
</g>
<rect x="0" y="243.6" width="207.4" height="19.5" fill="url(#ground)"/>
<path d="M163.7 263.1 L169.7 248.1 L207.4 248.1 L207.4 263.1 Z" fill="#8c8681"/>
<ellipse cx="24.2" cy="252.1" rx="8.5" ry="6" fill="#6e5c4c"/>
<circle cx="94.0" cy="250.1" r="1.5" fill="#fff"/><circle cx="103.1" cy="250.1" r="1.5" fill="#fff" opacity=".55"/><circle cx="112.2" cy="250.1" r="1.5" fill="#fff" opacity=".55"/>
</svg>

  <div class="a" style="left:70.7px;top:6.1px;width:66px;height:19px;border-radius:10px;background:#000"></div>
  <div class="a" style="left:9.5px;top:40.1px;width:24px;height:24px;border-radius:50%;background:#f4f1ee"></div>
  <svg class="a" style="left:17px;top:47.6px" width="9" height="9" viewBox="0 0 9 9"><path d="M1 1 L8 8 M8 1 L1 8" stroke="#333" stroke-width="1.2"/></svg>
  <div class="t" style="left:8.5px;top:278px;font-size:14.3px;font-weight:bold;color:#0a0a0a">Colosseum</div>
  <div class="t" style="left:8.5px;top:297.5px;font-size:10.8px;color:#1a1a1a">Rome</div>
  <div class="a" style="left:0;top:321.2px;width:207.4px;height:1px;background:#e0e0e1"></div>
  <div class="a" style="left:8.5px;top:334.5px;width:200px;font-size:10.2px;line-height:13.03px;color:#2a2a2c;-webkit-text-stroke:.15px currentColor;white-space:pre">The Colosseum is an oval amphitheatre
in the centre of the city of Rome, Italy,
just east of the Roman Forum. It is the
largest ancient amphitheatre ever built,
and is still the largest standing
amphitheatre in the world today, despite
its age.</div>
  <div class="t" style="left:8.5px;top:442.2px;font-size:9.3px;font-weight:bold;letter-spacing:-.35px;color:#2d78d6">Read more on Wikipedia</div>
</div></div>

<!-- preview toolbar -->
<div class="a" style="left:714px;top:625px;width:63px;height:18.5px;border-radius:5px;background:#3d3e41"></div>
<svg class="a" style="left:720.5px;top:629.5px" width="11" height="11" viewBox="0 0 11 11"><circle cx="5.5" cy="5.5" r="5.3" fill="#2a85f7"/><path d="M4.2 3.2 L7.8 5.5 L4.2 7.8 Z" fill="#0b3a7a"/></svg>
<svg class="a" style="left:739px;top:629px" width="11" height="12" viewBox="0 0 11 12" fill="none" stroke="#dcdcde" stroke-width="1"><rect x=".8" y="1" width="9.4" height="10" rx="1.2"/><path d="M3.6 3.4 L3.6 8.6 L5 7.3 L6.1 9.2 L6.9 8.8 L5.9 6.9 L7.7 6.7 Z" fill="#dcdcde" stroke="none"/></svg>
<svg class="a" style="left:760px;top:630px" width="11" height="10" viewBox="0 0 11 10" fill="none" stroke="#b9b9bc" stroke-width=".8"><circle cx="2" cy="2.5" r="1.3"/><circle cx="5.5" cy="2.5" r="1.3"/><circle cx="9" cy="2.5" r="1.3"/><circle cx="2" cy="7" r="1.3"/><circle cx="5.5" cy="7" r="1.3"/><circle cx="9" cy="7" r="1.3"/></svg>
<div class="a" style="left:787px;top:625px;width:22.6px;height:18.5px;border-radius:5px;background:#3d3e41"></div>
<svg class="a" style="left:792.5px;top:628.5px" width="12" height="12" viewBox="0 0 12 12"><rect x="1" y="1" width="10" height="4.2" rx="2.1" fill="none" stroke="#e8e8ea" stroke-width="1"/><circle cx="3.1" cy="3.1" r="1.3" fill="#e8e8ea"/><rect x="1" y="6.8" width="10" height="4.2" rx="2.1" fill="#e8e8ea"/><circle cx="8.9" cy="8.9" r="1.3" fill="#3d3e41"/></svg>
<div class="a" style="left:819px;top:625px;width:142px;height:18.5px;border-radius:5px;background:#3d3e41"></div>
<svg class="a" style="left:825.6px;top:630px" width="7" height="10" viewBox="0 0 7 10"><rect x=".6" y=".6" width="5.4" height="8.8" rx="1.2" fill="none" stroke="#b5b5b8" stroke-width="1"/></svg>
<div class="t" style="left:837px;top:630.6px;font-size:9.05px;color:#e8e8ea">Automatic – iPhone 15 Pro</div>
<svg class="a" style="left:949.5px;top:632px" width="7" height="5" viewBox="0 0 7 5"><path d="M.8 .8 L3.5 3.6 L6.2 .8" fill="none" stroke="#e0e0e2" stroke-width="1.2"/></svg>
<div class="a" style="left:1101px;top:625px;width:80px;height:18.6px;border-radius:5px;background:#3d3e41"></div>
<svg class="a" style="left:1106px;top:628.5px" width="70" height="12" viewBox="0 0 70 12" fill="none" stroke="#e0e0e2" stroke-width="1">
 <circle cx="5.6" cy="5" r="3.9"/><path d="M8.4 7.8 L10.8 10.2" stroke-width="1.4"/><path d="M3.7 5 H7.5"/>
 <circle cx="24.2" cy="5" r="3.9"/><path d="M27 7.8 L29.4 10.2" stroke-width="1.4"/><path d="M24 3.3 V6.8" stroke-width=".9"/>
 <circle cx="43.2" cy="5" r="3.9"/><path d="M46 7.8 L48.4 10.2" stroke-width="1.4"/><rect x="41.7" y="3.5" width="3" height="3" stroke-width=".8"/>
 <circle cx="61.9" cy="5" r="3.9"/><path d="M64.7 7.8 L67.1 10.2" stroke-width="1.4"/><path d="M60 5 H63.8 M61.9 3.1 V6.9"/>
</svg>

<!-- status bar -->
<div class="a" style="left:215px;top:654px;width:977px;height:22px;background:#232528"></div>
<div class="a" style="left:215px;top:653.7px;width:977px;height:1.6px;background:#131316"></div>
<svg class="a" style="left:224px;top:661.9px" width="12" height="8" viewBox="0 0 12 8"><path d="M1.5 0 H8.8 Q9.6 0 10.2 .7 L11.8 3.3 Q12.2 4 11.8 4.7 L10.2 7.3 Q9.6 8 8.8 8 H1.5 Q0 8 0 6.5 V1.5 Q0 0 1.5 0 Z" fill="#1b7ff6"/></svg>
<div class="t" style="left:1088px;top:661px;font-size:9.0px;color:#a3a3a6;font-weight:bold">Line: 16  Col: 24</div>
<div class="a" style="left:1164.2px;top:659px;width:1px;height:13px;background:#39393d"></div>
<svg class="a" style="left:1171px;top:660.5px" width="11.5" height="10.5" viewBox="0 0 12 11" fill="none" stroke="#a3a3a6" stroke-width="1"><rect x=".6" y=".6" width="10.8" height="9.8" rx="1.8"/><path d="M2.5 7.8 H9.5" stroke-width="1.6"/></svg>

<div class="a" style="left:0;top:0;width:1192px;height:676px;border-radius:7px;box-shadow:inset 0 0 0 1px rgba(255,255,255,.14)"></div>
</div>
</body></html>
